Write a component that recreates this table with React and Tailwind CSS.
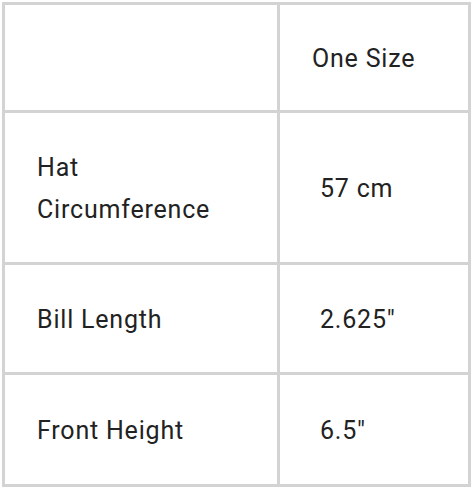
const rows = [
  { label: ["Hat", "Circumference"], value: "57 cm", h: "h-[149px]" },
  { label: ["Bill Length"], value: "2.625\"", h: "h-[107px]" },
  { label: ["Front Height"], value: "6.5\"", h: "h-[109px]" },
];

export default function App() {
  return (
    <div className="bg-white w-[473px] h-[488px] pt-[2px] pl-[2px] font-['Roboto',sans-serif] text-[25px] tracking-[0.8px] text-[#222222]">
      <div className="w-[469px] grid grid-cols-[272px_188px] gap-[3px] p-[3px] bg-[#d3d3d3]">
        {/* header */}
        <div className="bg-white h-[105px]" />
        <div className="bg-white h-[105px] flex items-center pt-[2px] pl-[32px]">One Size</div>

        {rows.map((row) => (
          <>
            <div key={row.value + "l"} className={`bg-white ${row.h} flex items-center pt-[2px] pl-[32px]`}>
              <div className="leading-[42px]">
                {row.label.map((line) => (
                  <div key={line}>{line}</div>
                ))}
              </div>
            </div>
            <div key={row.value + "v"} className={`bg-white ${row.h} flex items-center pt-[2px] pl-[40px]`}>
              {row.value}
            </div>
          </>
        ))}
      </div>
    </div>
  );
}
